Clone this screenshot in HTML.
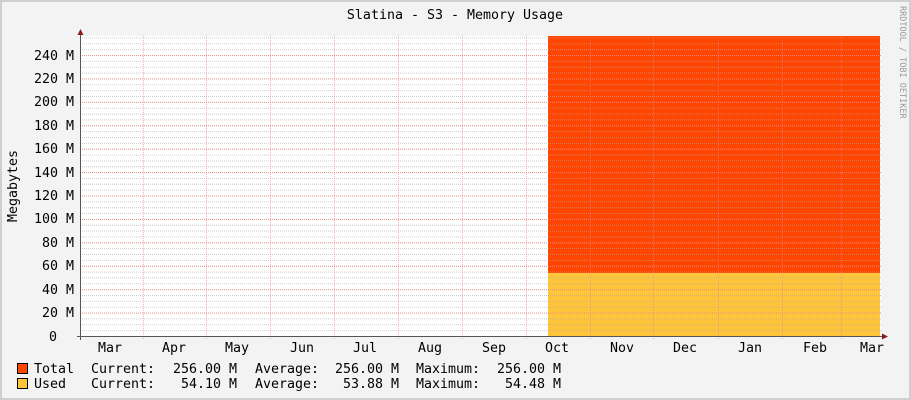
<!DOCTYPE html>
<html><head><meta charset="utf-8"><style>
html,body{margin:0;padding:0;background:#f3f3f3}
svg{display:block}
text{font-family:"DejaVu Sans Mono","Liberation Mono",monospace;fill:#000}
</style></head><body>
<svg width="911" height="400" xmlns="http://www.w3.org/2000/svg">
<defs>
<pattern id="minor" x="0" y="336" width="911" height="5.8537" patternUnits="userSpaceOnUse">
<line x1="0" y1="0.5" x2="911" y2="0.5" stroke="#aaa" stroke-width="1" stroke-dasharray="1,1" stroke-opacity="0.6"/>
</pattern>
<pattern id="major" x="0" y="336" width="911" height="23.415" patternUnits="userSpaceOnUse">
<line x1="0" y1="0.5" x2="911" y2="0.5" stroke="#f08080" stroke-width="1" stroke-dasharray="1,1" stroke-opacity="0.8"/>
</pattern>
</defs>
<rect x="0" y="0" width="911" height="400" fill="#f3f3f3"/>
<rect x="1" y="1" width="909" height="398" fill="none" stroke="#cfcfcf" stroke-width="2"/>
<rect x="81" y="36" width="800" height="300" fill="#fff"/>
<rect x="548" y="36" width="332" height="237" fill="#ff4500"/>
<rect x="548" y="273" width="332" height="63" fill="#ffc53a"/>
<rect x="81" y="36" width="800" height="300" fill="url(#minor)"/>
<rect x="81" y="36" width="800" height="300" fill="url(#major)"/>
<g stroke="#f08080" stroke-width="1" stroke-dasharray="1,1" stroke-opacity="0.6">
<line x1="143.5" y1="36" x2="143.5" y2="340"/>
<line x1="206.5" y1="36" x2="206.5" y2="340"/>
<line x1="270.5" y1="36" x2="270.5" y2="340"/>
<line x1="334.5" y1="36" x2="334.5" y2="340"/>
<line x1="398.5" y1="36" x2="398.5" y2="340"/>
<line x1="462.5" y1="36" x2="462.5" y2="340"/>
<line x1="526.5" y1="36" x2="526.5" y2="340"/>
<line x1="590.5" y1="36" x2="590.5" y2="340"/>
<line x1="653.5" y1="36" x2="653.5" y2="340"/>
<line x1="718.5" y1="36" x2="718.5" y2="340"/>
<line x1="782.5" y1="36" x2="782.5" y2="340"/>
<line x1="841.5" y1="36" x2="841.5" y2="340"/>
</g>
<line x1="80.5" y1="34" x2="80.5" y2="340" stroke="#555"/>
<line x1="77" y1="336.5" x2="883" y2="336.5" stroke="#555"/>
<polygon points="77.5,35 80.5,29 83.5,35" fill="#8b1a1a"/>
<polygon points="882,333.5 888,336.5 882,339.5" fill="#8b1a1a"/>
<text x="455" y="19" text-anchor="middle" font-size="13.3">Slatina - S3 - Memory Usage</text>
<text transform="translate(17,186) rotate(-90)" text-anchor="middle" font-size="13.3">Megabytes</text>
<text transform="translate(900,6) rotate(90)" font-size="8.5" style="fill:#999">RRDTOOL / TOBI OETIKER</text>
<g font-size="13.3" text-anchor="end">
<text x="74" y="60">240 M</text>
<text x="74" y="83">220 M</text>
<text x="74" y="106">200 M</text>
<text x="74" y="130">180 M</text>
<text x="74" y="153">160 M</text>
<text x="74" y="177">140 M</text>
<text x="74" y="200">120 M</text>
<text x="74" y="223">100 M</text>
<text x="74" y="247">80 M</text>
<text x="74" y="270">60 M</text>
<text x="74" y="294">40 M</text>
<text x="74" y="317">20 M</text>
<text x="57" y="341">0</text>
</g>
<g font-size="13.3" text-anchor="middle">
<text x="110" y="352">Mar</text>
<text x="174" y="352">Apr</text>
<text x="237" y="352">May</text>
<text x="302" y="352">Jun</text>
<text x="365" y="352">Jul</text>
<text x="430" y="352">Aug</text>
<text x="494" y="352">Sep</text>
<text x="557" y="352">Oct</text>
<text x="622" y="352">Nov</text>
<text x="685" y="352">Dec</text>
<text x="750" y="352">Jan</text>
<text x="815" y="352">Feb</text>
<text x="872" y="352">Mar</text>
</g>
<rect x="17.5" y="363.5" width="10" height="10" fill="#ff4500" stroke="#000"/>
<rect x="17.5" y="378.5" width="10" height="10" fill="#ffc53a" stroke="#000"/>
<g font-size="13.3">
<text x="34" y="373">Total</text>
<text x="91" y="373">Current:</text>
<text x="237" y="373" text-anchor="end">256.00 M</text>
<text x="255" y="373">Average:</text>
<text x="399" y="373" text-anchor="end">256.00 M</text>
<text x="416" y="373">Maximum:</text>
<text x="561" y="373" text-anchor="end">256.00 M</text>
<text x="34" y="388">Used</text>
<text x="91" y="388">Current:</text>
<text x="237" y="388" text-anchor="end">54.10 M</text>
<text x="255" y="388">Average:</text>
<text x="399" y="388" text-anchor="end">53.88 M</text>
<text x="416" y="388">Maximum:</text>
<text x="561" y="388" text-anchor="end">54.48 M</text>
</g>
</svg>
</body></html>
